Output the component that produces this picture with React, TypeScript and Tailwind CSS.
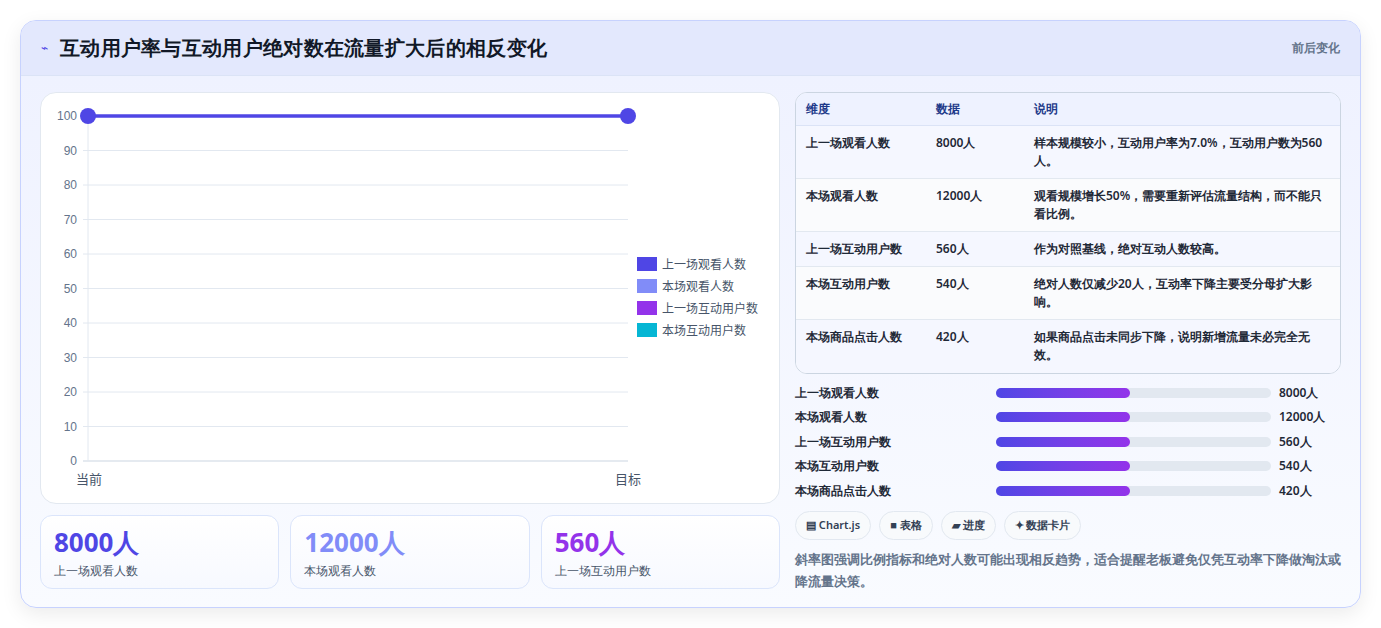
const font = "font-['Noto_Sans_CJK_SC','Noto_Sans',sans-serif]";

const rows = [
  ["上一场观看人数", "8000人", "样本规模较小，互动用户率为7.0%，互动用户数为560人。", "h-[53px]"],
  ["本场观看人数", "12000人", "观看规模增长50%，需要重新评估流量结构，而不能只看比例。", "h-[53px]"],
  ["上一场互动用户数", "560人", "作为对照基线，绝对互动人数较高。", "h-[35px]"],
  ["本场互动用户数", "540人", "绝对人数仅减少20人，互动率下降主要受分母扩大影响。", "h-[53px]"],
  ["本场商品点击人数", "420人", "如果商品点击未同步下降，说明新增流量未必完全无效。", "h-[53px]"],
];

const legend = [
  ["上一场观看人数", "#4f46e5"],
  ["本场观看人数", "#818cf8"],
  ["上一场互动用户数", "#9333ea"],
  ["本场互动用户数", "#06b6d4"],
];

function Chart() {
  const ticks = [0, 10, 20, 30, 40, 50, 60, 70, 80, 90, 100];
  const y = (v: number) => 23 + (100 - v) * 3.45;
  return (
    <svg width="738" height="410" className="block">
      {ticks.map((t) => (
        <g key={t}>
          <line x1="42" x2="587" y1={y(t)} y2={y(t)} stroke={t === 0 ? "#cbd5e1" : "#e2e8f0"} strokeWidth="1" />
          <text x="36" y={y(t) + 4} textAnchor="end" fontSize="12" fill="#64748b" fontFamily="Liberation Sans, sans-serif">{t}</text>
        </g>
      ))}
      <line x1="47" x2="47" y1={y(100)} y2={y(0)} stroke="#e2e8f0" />
      <text x="48" y="391" textAnchor="middle" fontSize="13" fill="#475569" fontFamily="Noto Sans CJK SC, sans-serif">当前</text>
      <text x="587" y="391" textAnchor="middle" fontSize="13" fill="#475569" fontFamily="Noto Sans CJK SC, sans-serif">目标</text>
      <line x1="47" x2="587" y1={y(100)} y2={y(100)} stroke="#4f46e5" strokeWidth="3.5" />
      <circle cx="47" cy={y(100)} r="8" fill="#4f46e5" />
      <circle cx="587" cy={y(100)} r="8" fill="#4f46e5" />
      {legend.map(([l, c], i) => (
        <g key={l}>
          <rect x="596" y={164 + i * 22} width="20" height="14" fill={c} />
          <text x="621" y={176 + i * 22} fontSize="12" fill="#475569" fontFamily="Noto Sans CJK SC, sans-serif">{l}</text>
        </g>
      ))}
    </svg>
  );
}

export default function App() {
  return (
    <div className={`${font} w-[1381px] h-[628px] bg-white pt-5 px-5`}>
      <div className="w-[1341px] h-[588px] rounded-2xl border border-[#c7d2fe] bg-gradient-to-b from-[#eef1ff] to-[#f9fbff] shadow-[0_6px_20px_rgba(0,0,0,0.08)] overflow-hidden">
        <div className="h-[55px] flex items-center justify-between px-5 bg-[#e3e8fd] border-b border-[#dbe3f6]">
          <div className="flex items-center gap-3">
            <span className="text-[#4f46e5] text-xs">⌁</span>
            <h1 className="text-[20px] font-black text-[#111827] tracking-[0.3px]">互动用户率与互动用户绝对数在流量扩大后的相反变化</h1>
          </div>
          <span className="text-[12px] font-semibold text-[#64748b]">前后变化</span>
        </div>
        <div className="flex gap-[15px] px-[19px] pt-[16px]">
          <div className="w-[740px] flex flex-col gap-[11px]">
            <div className="h-[412px] rounded-2xl bg-white border border-[#e2e8f0]">
              <Chart />
            </div>
            <div className="grid grid-cols-3 gap-[11px]">
              {[
                ["8000人", "上一场观看人数", "text-[#4f46e5]"],
                ["12000人", "本场观看人数", "text-[#818cf8]"],
                ["560人", "上一场互动用户数", "text-[#9333ea]"],
              ].map(([v, l, c]) => (
                <div key={l} className="h-[74px] rounded-xl border border-[#dbe5fb] bg-gradient-to-b from-white to-[#f7f9ff] px-[13px] pt-2">
                  <div className={`text-[26px] font-bold leading-[36px] ${c}`}>{v}</div>
                  <div className="text-[12px] text-[#475569] mt-[2px]">{l}</div>
                </div>
              ))}
            </div>
          </div>
          <div className="w-[547px] flex flex-col">
            <div className="rounded-xl border border-[#cbd5e1] overflow-hidden bg-white text-[12px]">
              <div className="flex h-[33px] items-center bg-[#eef2ff] text-[#1e3a8a] font-semibold border-b border-[#dbe3f6]">
                <div className="w-[140px] pl-[10px]">维度</div>
                <div className="w-[98px]">数据</div>
                <div className="flex-1">说明</div>
              </div>
              {rows.map(([a, b, c, h], i) => (
                <div key={a} className={`flex ${h} pt-[8px] font-semibold text-[#1f2937] ${i % 2 === 0 ? "bg-[#f5f7ff]" : "bg-[#fafbfd]"} ${i < 4 ? "border-b border-[#e2e8f0]" : ""}`}>
                  <div className="w-[140px] pl-[10px]">{a}</div>
                  <div className="w-[98px]">{b}</div>
                  <div className="flex-1 pr-4 leading-[18px]">{c}</div>
                </div>
              ))}
            </div>
            <div className="mt-[10px] flex flex-col gap-[7px]">
              {rows.map(([a, b]) => (
                <div key={a} className="flex items-center h-[17.5px] text-[12px] font-semibold text-[#1f2937]">
                  <div className="w-[201px]">{a}</div>
                  <div className="w-[275px] h-[10px] rounded-full bg-[#e2e8f0]">
                    <div className="w-[134px] h-full rounded-full bg-gradient-to-r from-[#4f46e5] to-[#9333ea]" />
                  </div>
                  <div className="ml-[8px]">{b}</div>
                </div>
              ))}
            </div>
            <div className="flex gap-2 mt-[11px]">
              {["▤ Chart.js", "■ 表格", "▰ 进度", "✦ 数据卡片"].map((t) => (
                <span key={t} className="h-[29px] px-[10px] flex items-center rounded-full border border-[#e2e8f0] bg-[#f8fafc] text-[11px] font-semibold text-[#334155]">{t}</span>
              ))}
            </div>
            <p className="mt-[8px] text-[13px] leading-[22px] font-semibold text-[#64748b]">斜率图强调比例指标和绝对人数可能出现相反趋势，适合提醒老板避免仅凭互动率下降做淘汰或降流量决策。</p>
          </div>
        </div>
      </div>
    </div>
  );
}
